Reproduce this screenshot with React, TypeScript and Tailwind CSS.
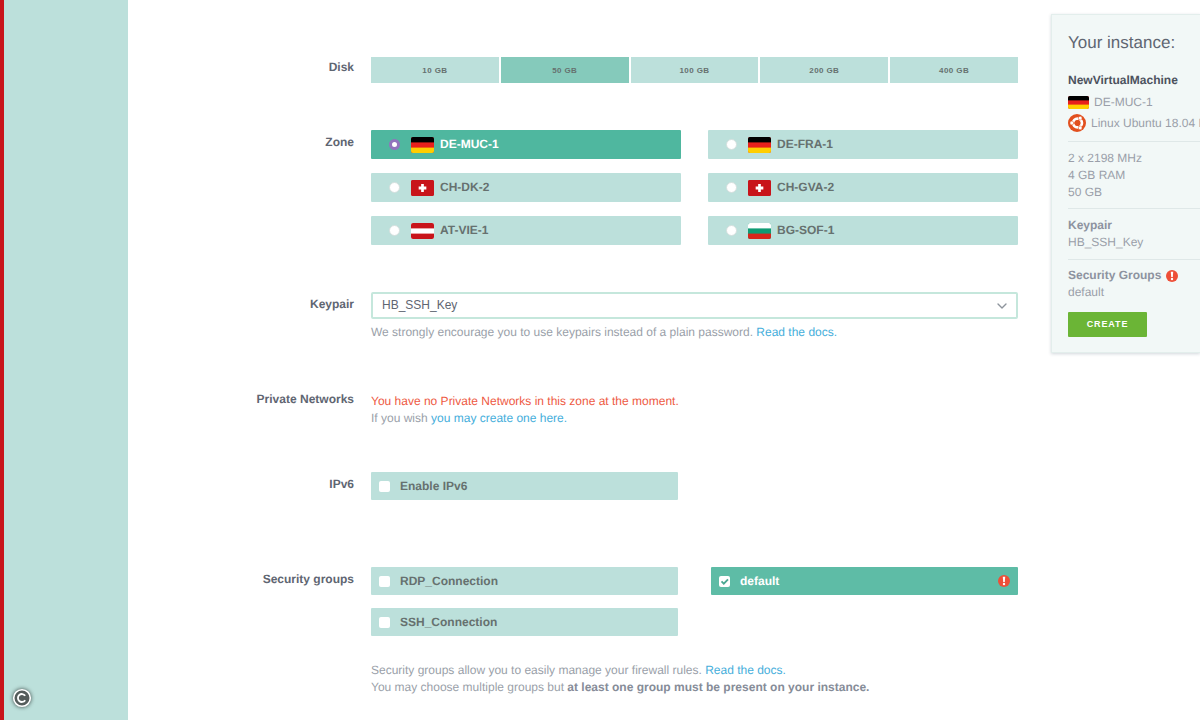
import { useState, type ReactNode } from "react";
import clsx from "clsx";
import { ChevronDown } from "lucide-react";

type Country = "de" | "ch" | "at" | "bg";

const disks = ["10 GB", "50 GB", "100 GB", "200 GB", "400 GB"];

const zones: { name: string; country: Country }[] = [
  { name: "DE-MUC-1", country: "de" },
  { name: "DE-FRA-1", country: "de" },
  { name: "CH-DK-2", country: "ch" },
  { name: "CH-GVA-2", country: "ch" },
  { name: "AT-VIE-1", country: "at" },
  { name: "BG-SOF-1", country: "bg" },
];

const stripes: Record<Country, string[]> = {
  de: ["#000000", "#e8201c", "#ffce00"],
  ch: ["#c8141a", "#c8141a", "#c8141a"],
  at: ["#c8141a", "#ffffff", "#c8141a"],
  bg: ["#ffffff", "#0f9b74", "#d8261c"],
};

function Flag({ country, className }: { country: Country; className: string }) {
  const [top, middle, bottom] = stripes[country];
  return (
    <svg viewBox="0 0 24 16" preserveAspectRatio="none" className={clsx("shrink-0 rounded-[2px]", className)} aria-hidden="true">
      <rect width="24" height="16" fill={middle} />
      <rect width="24" height="5.4" fill={top} />
      <rect y="10.6" width="24" height="5.4" fill={bottom} />
      {country === "ch" && <path d="M10.6 4h2.8v2.6H16v2.8h-2.6V12h-2.8V9.4H8V6.6h2.6z" fill="#fff" />}
    </svg>
  );
}

function UbuntuLogo() {
  return (
    <svg viewBox="0 0 36 36" className="size-[18px] shrink-0" aria-hidden="true">
      <circle cx="18" cy="18" r="18" fill="#e2501f" />
      <circle cx="19" cy="18" r="8.8" fill="none" stroke="#fff" strokeWidth="5.6" />
      <path d="M18 18 5 18M18 18l7-12M18 18l7 12" stroke="#e2501f" strokeWidth="1.6" />
      <circle cx="19" cy="18" r="5.6" fill="#e2501f" />
      <g fill="#fff" stroke="#e2501f" strokeWidth="1">
        <circle cx="7.6" cy="18" r="3.8" />
        <circle cx="24.4" cy="8.2" r="3.8" />
        <circle cx="24.4" cy="27.8" r="3.8" />
      </g>
    </svg>
  );
}

function Alert() {
  return (
    <svg viewBox="0 0 12 12" className="size-3 shrink-0" aria-hidden="true">
      <circle cx="6" cy="6" r="6" fill="#ee4f38" />
      <path d="M4.8 1.8h2.4L6.8 7H5.2z" fill="#fff" />
      <circle cx="6" cy="9" r="1.2" fill="#fff" />
    </svg>
  );
}

function Row({ label, htmlFor, className, children }: { label: string; htmlFor?: string; className?: string; children: ReactNode }) {
  const labelClass = "w-[226px] shrink-0 pt-1 text-right font-bold text-[#5f6672]";
  return (
    <div className={clsx("flex gap-[17px]", className)}>
      {htmlFor ? (
        <label htmlFor={htmlFor} className={labelClass}>{label}</label>
      ) : (
        <div className={labelClass}>{label}</div>
      )}
      <div className="min-w-0 flex-1">{children}</div>
    </div>
  );
}

function CheckTile({ id, label, checked, onChange, warn }: { id: string; label: string; checked: boolean; onChange: () => void; warn?: boolean }) {
  return (
    <label
      htmlFor={id}
      className={clsx(
        "flex h-7 items-center rounded-[1px] px-2 font-bold",
        checked ? "bg-[#5ebca6] text-white" : "bg-[#bce0db] text-[#66716f]"
      )}
    >
      <span className="relative mr-[10px] flex size-[11px]">
        <input
          id={id}
          type="checkbox"
          checked={checked}
          onChange={onChange}
          className="size-[11px] appearance-none rounded-[2px] bg-white"
        />
        {checked && (
          <svg viewBox="0 0 11 11" className="pointer-events-none absolute inset-0" aria-hidden="true">
            <path d="M2.5 5.4l2.3 2.3 4.2-4.4" fill="none" stroke="#4aa892" strokeWidth="1.8" />
          </svg>
        )}
      </span>
      <span className="flex-1">{label}</span>
      {warn && <Alert />}
    </label>
  );
}

function DocLink({ children }: { children: ReactNode }) {
  return <a href="#" className="text-[#45aedb]">{children}</a>;
}

export default function App() {
  const [disk, setDisk] = useState("50 GB");
  const [zone, setZone] = useState("DE-MUC-1");
  const [ipv6, setIpv6] = useState(false);
  const [groups, setGroups] = useState(["default"]);

  const toggle = (name: string) =>
    setGroups(groups.includes(name) ? groups.filter((g) => g !== name) : [...groups, name]);

  return (
    <div className="relative flex min-h-screen overflow-hidden bg-white font-['Liberation_Sans',Arial,sans-serif] text-[12px] leading-[17px] text-[#9a9fa9] [text-rendering:geometricPrecision]">
      <nav className="w-32 shrink-0 border-l-4 border-[#c8141a] bg-[#bce0db]" />

      <form className="min-w-0 flex-1 pt-[55px] pb-6" onSubmit={(e) => e.preventDefault()}>
        <Row label="Disk" className="mb-[47px]">
          <div className="grid grid-cols-5 gap-0.5 pt-0.5">
            {disks.map((d) => (
              <button
                key={d}
                type="button"
                onClick={() => setDisk(d)}
                className={clsx(
                  "h-[26px] text-[8px] font-bold tracking-wider text-[#66716f]",
                  d === disk ? "bg-[#85cabb]" : "bg-[#bce0db]"
                )}
              >
                {d}
              </button>
            ))}
          </div>
        </Row>

        <Row label="Zone" className="mb-[47px]">
          <div className="grid grid-cols-2 gap-x-[27px] gap-y-[14px]">
            {zones.map((z) => (
              <label
                key={z.name}
                className={clsx(
                  "flex h-[29px] items-center rounded-[1px] pl-[18px] font-bold",
                  z.name === zone ? "bg-[#4fb79f] text-white" : "bg-[#bce0db] text-[#66716f]"
                )}
              >
                <input
                  type="radio"
                  name="zone"
                  checked={z.name === zone}
                  onChange={() => setZone(z.name)}
                  className="size-[11px] appearance-none rounded-full border border-[#d3dfdd] bg-white checked:border-3 checked:border-[#9273bd]"
                />
                <Flag country={z.country} className="mr-1.5 ml-[11px] h-4 w-[23px]" />
                {z.name}
              </label>
            ))}
          </div>
        </Row>

        <Row label="Keypair" htmlFor="keypair" className="mb-[46px]">
          <div className="relative">
            <select
              id="keypair"
              className="block h-[27px] w-full appearance-none rounded-[2px] border-2 border-[#c5e7dc] bg-white px-[9px] text-[#5f6672]"
            >
              <option>HB_SSH_Key</option>
            </select>
            <ChevronDown className="pointer-events-none absolute top-1.5 right-2 size-4 text-[#8d949c]" />
          </div>
          <p className="mt-[5px]">
            We strongly encourage you to use keypairs instead of a plain password. <DocLink>Read the docs.</DocLink>
          </p>
        </Row>

        <Row label="Private Networks" className="mb-[45px]">
          <p className="pt-1.5 text-[#ee5a43]">You have no Private Networks in this zone at the moment.</p>
          <p>
            If you wish <DocLink>you may create one here.</DocLink>
          </p>
        </Row>

        <Row label="IPv6" className="mb-[67px]">
          <div className="grid grid-cols-2 gap-x-[33px]">
            <CheckTile id="ipv6" label="Enable IPv6" checked={ipv6} onChange={() => setIpv6(!ipv6)} />
          </div>
        </Row>

        <Row label="Security groups">
          <div className="grid grid-cols-2 gap-x-[33px] gap-y-[13px]">
            {["RDP_Connection", "default", "SSH_Connection"].map((name) => (
              <CheckTile
                key={name}
                id={name}
                label={name}
                checked={groups.includes(name)}
                onChange={() => toggle(name)}
                warn={name === "default"}
              />
            ))}
          </div>
          <p className="mt-[26px]">
            Security groups allow you to easily manage your firewall rules. <DocLink>Read the docs.</DocLink>
            <br />
            You may choose multiple groups but <b className="text-[#868c98]">at least one group must be present on your instance.</b>
          </p>
        </Row>
      </form>

      <aside className="mt-[14px] ml-[33px] w-[149px] shrink-0 self-start overflow-hidden border border-r-0 border-[#e3eeec] bg-[#f2f8f7] pt-[18px] pb-[15px] pl-4 whitespace-nowrap shadow-[0_1px_3px_rgba(80,100,120,0.25)]">
        <h2 className="text-[17px] leading-5 text-[#5f6672]">Your instance:</h2>
        <p className="mt-[19px] font-bold text-[#4c525e]">NewVirtualMachine</p>
        <p className="mt-[5px] flex items-center gap-[5px]">
          <Flag country="de" className="h-[13px] w-[21px]" />
          DE-MUC-1
        </p>
        <p className="mt-[3px] flex items-center gap-[5px]">
          <UbuntuLogo />
          Linux Ubuntu 18.04 LTS
        </p>
        <div className="mt-[9px] border-t border-[#dfe8e8] pt-2">
          <p>2 x 2198 MHz</p>
          <p>4 GB RAM</p>
          <p>50 GB</p>
        </div>
        <div className="mt-[7px] border-t border-[#dfe8e8] pt-2">
          <p className="font-bold text-[#8d93a0]">Keypair</p>
          <p>HB_SSH_Key</p>
        </div>
        <div className="mt-2 border-t border-[#dfe8e8] pt-[7px]">
          <p className="flex items-center gap-[5px] font-bold text-[#8d93a0]">
            Security Groups <Alert />
          </p>
          <p>default</p>
        </div>
        <button type="button" className="mt-[11px] block h-[25px] w-[79px] rounded-[1px] bg-[#6bb536] text-[9px] font-bold tracking-widest text-white">
          CREATE
        </button>
      </aside>

      <svg viewBox="0 0 20 20" className="absolute bottom-3 left-3 size-5 drop-shadow-[0_0_2px_rgba(0,0,0,0.7)]" aria-hidden="true">
        <circle cx="10" cy="10" r="8.3" fill="#555c5b" stroke="#fff" strokeWidth="1.6" />
        <path d="M13.2 7.7a4 4 0 1 0 0 4.6" fill="none" stroke="#fff" strokeWidth="1.8" />
      </svg>
    </div>
  );
}
